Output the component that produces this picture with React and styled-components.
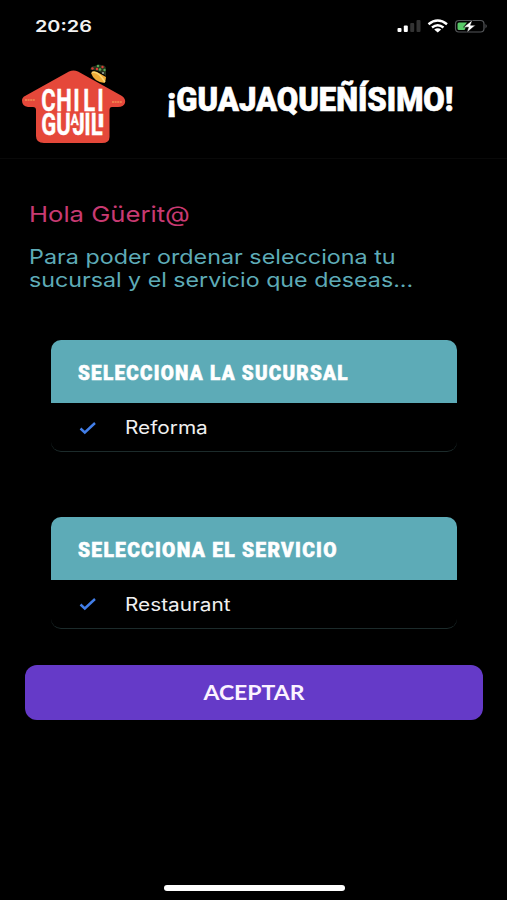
import React from 'react';
import styled, { createGlobalStyle } from 'styled-components';

const GlobalStyle = createGlobalStyle`
  * {
    box-sizing: border-box;
  }

  body {
    margin: 0;
    background: #000;
    font-family: Inter, 'Liberation Sans', sans-serif;
  }
`;

const Screen = styled.div`
  display: flex;
  flex-direction: column;
  width: 507px;
  height: 900px;
  overflow: hidden;
  background: #000;
`;

const Wide = styled.span`
  display: inline-block;
  white-space: nowrap;
  transform: scaleX(${({ $x }) => $x});
  transform-origin: ${({ $origin }) => $origin || 'left'} center;
`;

const StatusBar = styled.div`
  display: flex;
  align-items: center;
  justify-content: space-between;
  height: 52px;
  padding: 0 18px 0 35px;
  color: #f2f2f2;
  font-size: 16px;
  font-weight: 600;
`;

const StatusIcons = styled.div`
  display: flex;
  align-items: center;
  height: 20px;
`;

const Header = styled.header`
  display: flex;
  align-items: flex-start;
  height: 107px;
  padding: 10px 0 0 20px;
  border-bottom: 1px solid #090909;
`;

const Title = styled.h1`
  margin: 16px 0 0 39.5px;
  color: #fff;
  font-family: Roboto, sans-serif;
  font-size: 33px;
  font-weight: 900;
  line-height: 44px;
  -webkit-text-stroke: 0.7px #fff;
`;

const Greeting = styled.h2`
  margin: 39px 0 0 29px;
  color: #c83a72;
  font-size: 22px;
  font-weight: 400;
  line-height: 32px;
`;

const Intro = styled.p`
  display: flex;
  flex-direction: column;
  align-items: flex-start;
  margin: 16px 0 0 29px;
  color: #5eabb7;
  font-size: 20px;
  line-height: 23px;
`;

const Cards = styled.div`
  display: flex;
  flex-direction: column;
  gap: 64.6px;
  margin: 48px 50px 0 51px;
`;

const Card = styled.section`
  height: 112px;
  overflow: hidden;
  border-bottom: 1px solid #1c2b2b;
  border-radius: 10px;
`;

const CardHeader = styled.div`
  display: flex;
  align-items: center;
  height: 63px;
  padding: 3px 0 0 27px;
  background: #5dabb7;
  color: #fff;
  font-family: Roboto, sans-serif;
  font-size: 21px;
  font-weight: 900;
  letter-spacing: 1.4px;
  -webkit-text-stroke: 0.6px #fff;
`;

const Option = styled.div`
  display: flex;
  align-items: center;
  height: 49px;
  padding-left: 28px;
  color: #f0f0f0;
  font-size: 18px;
`;

const Check = styled.svg`
  width: 18px;
  height: 14px;
  margin-right: 28px;
`;

const Accept = styled.button`
  display: flex;
  align-items: center;
  justify-content: center;
  width: 458px;
  height: 55.5px;
  margin: 36.4px 0 0 25px;
  padding: 0 0 1px;
  border: 0;
  border-radius: 12px;
  background: #653ac8;
  color: #fbf2ff;
  font-family: Lato, sans-serif;
  font-size: 20px;
  font-weight: 700;
`;

const HomeIndicator = styled.div`
  width: 181px;
  height: 6px;
  margin: auto 0 9px 164px;
  border-radius: 3px;
  background: #fff;
`;

const Logo = () => (
  <svg width="107" height="86" viewBox="20 62 107 86" aria-label="Chili Guajili">
    <path
      d="M69 71.500Q73.500 69.500 78 71.500L122 96Q126 99 125 103Q123.500 107 118 107H112Q109.500 107 109.500 110V137Q109.500 143 102 143H44Q36 143 36 136V110Q36 107 33 107H28Q22 106 22 100.500Q22 97.500 25 96Z"
      fill="#e5483a"
    />
    <path d="M25 100H35M112 102H122" stroke="#f3a05a" strokeWidth="1.4" strokeDasharray="2 .6" opacity=".8" />
    <g fill="#fff" stroke="#fff" strokeWidth=".4" fontFamily="Roboto" fontWeight="700" fontSize="31.500">
      <g transform="scale(.7 1)">
        <text x="59 80.200 104.800 118.800 139" y="111">CHILI</text>
        <text x="59 80.200" y="135.300">GU</text>
        <text x="103.500" y="135.300">J</text>
        <text x="120.300 129.800" y="135.300">IL</text>
      </g>
      <text x="70.800" y="124.500" fontSize="15.500" textLength="8" lengthAdjust="spacingAndGlyphs">A</text>
      <text x="97.300" y="126.500" fontSize="19" textLength="7.500" lengthAdjust="spacingAndGlyphs">I</text>
    </g>
    <path d="M91 73Q93 70 97 72L106 77Q106 80 104.500 83Q94 82 91 73Z" fill="#efac38" />
    <path d="M92 72.500Q98 70.500 105 82" fill="none" stroke="#f8d675" strokeWidth="1.500" />
    <path d="M90.500 70Q90 66 95 66Q98 63.500 101 65Q106 65 106 69V76Q98 69 90.500 70Z" fill="#26351f" />
    <g fill="#58a755">
      <circle cx="98" cy="66" r="1.200" />
      <circle cx="100" cy="69.500" r="1.300" />
      <circle cx="104.500" cy="70" r="1.200" />
    </g>
    <g fill="#de3b36">
      <circle cx="92.500" cy="68.500" r="1.200" />
      <circle cx="97" cy="69" r="1.200" />
      <circle cx="102.500" cy="67" r="1.200" />
    </g>
    <circle cx="103" cy="73" r=".8" fill="#fff" />
  </svg>
);

const PhoneIcons = () => (
  <svg width="94" height="20" viewBox="395 16 94 20" aria-hidden="true">
    <rect x="397.500" y="28" width="4" height="4" rx="1" fill="#fff" />
    <rect x="403.800" y="25.500" width="4" height="6.500" rx="1" fill="#fff" />
    <rect x="410.200" y="23" width="4" height="9" rx="1" fill="#333" />
    <rect x="416.500" y="20" width="4" height="12" rx="1" fill="#333" />
    <g fill="none" stroke="#fff" strokeWidth="2.500">
      <path d="M428.500 24.200Q437.700 16.800 447 24.200" />
      <path d="M432 27.500Q437.700 23 443.500 27.500" />
    </g>
    <path d="M434.200 29.500Q437.700 27.200 441.200 29.500L437.700 32.500Z" fill="#fff" />
    <rect x="455.500" y="20.500" width="28.500" height="11.500" rx="3.500" fill="none" stroke="#55575a" strokeWidth="1.200" />
    <path d="M485.500 24Q488 26.200 485.500 28.500Z" fill="#55575a" />
    <path d="M459 22.500H467L463.500 27H466L464.500 30H459Q457.500 30 457.500 28.500V24Q457.500 22.500 459 22.500Z" fill="#58c968" />
    <path d="M472.500 20L463.500 27.200H468.500L466.800 32.500L475.500 25.200H470.500Z" fill="#fff" stroke="#000" strokeWidth=".5" />
  </svg>
);

const SelectCard = ({ title, titleScale, option }) => (
  <Card>
    <CardHeader>
      <Wide $x={titleScale}>{title}</Wide>
    </CardHeader>
    <Option>
      <Check viewBox="0 0 18 14" aria-hidden="true">
        <path d="M1.500 7.500L5.800 11.500L16 2" fill="none" stroke="#427ee8" strokeWidth="2.400" />
      </Check>
      <Wide $x={1.155}>{option}</Wide>
    </Option>
  </Card>
);

const App = () => (
  <>
    <GlobalStyle />
    <Screen>
      <StatusBar>
        <Wide $x={1.24}>20:26</Wide>
        <StatusIcons>
          <PhoneIcons />
        </StatusIcons>
      </StatusBar>
      <Header>
        <Logo />
        <Title>
          <Wide $x={0.94}>¡GUAJAQUEÑÍSIMO!</Wide>
        </Title>
      </Header>
      <Greeting>
        <Wide $x={1.165}>Hola Güerit@</Wide>
      </Greeting>
      <Intro>
        <Wide $x={1.166}>Para poder ordenar selecciona tu</Wide>
        <Wide $x={1.16}>sucursal y el servicio que deseas...</Wide>
      </Intro>
      <Cards>
        <SelectCard title="SELECCIONA LA SUCURSAL" titleScale={0.902} option="Reforma" />
        <SelectCard title="SELECCIONA EL SERVICIO" titleScale={0.917} option="Restaurant" />
      </Cards>
      <Accept>
        <Wide $x={1.15} $origin="center">
          ACEPTAR
        </Wide>
      </Accept>
      <HomeIndicator />
    </Screen>
  </>
);

export default App;
